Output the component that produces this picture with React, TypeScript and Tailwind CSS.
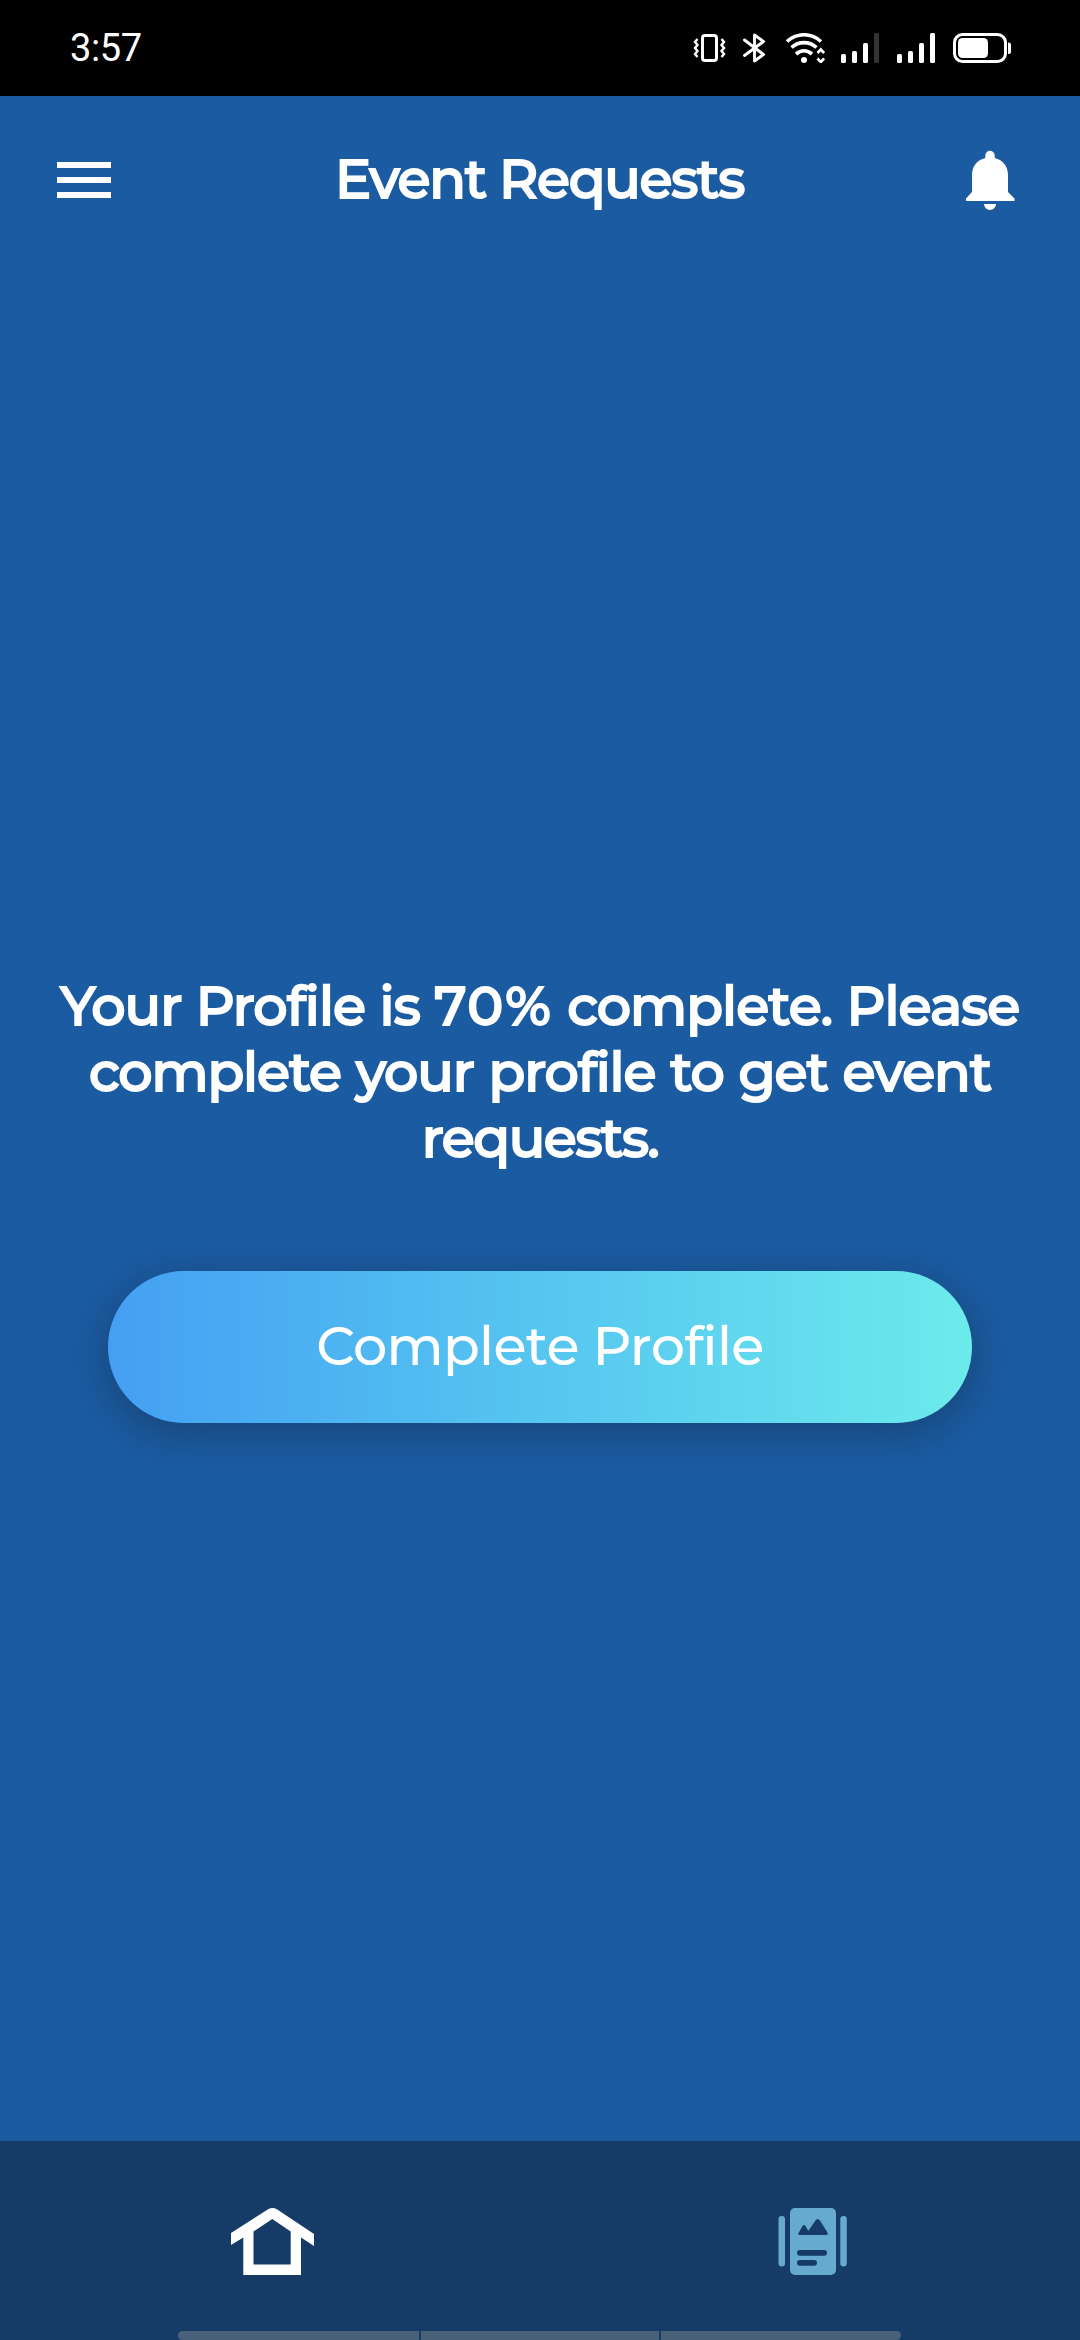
import type { ReactNode } from 'react';

type IconProps = { box: string; className: string; children: ReactNode };

const Icon = ({ box, className, children }: IconProps) => (
  <svg viewBox={box} className={`shrink-0 ${className}`} fill="none" aria-hidden="true">
    {children}
  </svg>
);

const SignalBars = ({ dimLast = false }: { dimLast?: boolean }) => (
  <Icon box="0 0 38 30" className="h-[30px] w-[38px]">
    <rect x="0" y="21" width="5" height="9" rx="1.5" fill="#fff" />
    <rect x="11" y="18" width="5" height="12" rx="1.5" fill="#fff" />
    <rect x="22" y="10" width="5" height="20" rx="1.5" fill="#fff" />
    <rect x="33" y="0" width="5" height="30" rx="1.5" fill={dimLast ? '#333' : '#fff'} />
  </Icon>
);

function StatusBar() {
  return (
    <div className="flex h-24 shrink-0 items-center justify-between bg-black pl-[70px] pr-[69px]">
      <span className="font-['Roboto',sans-serif] text-[38px] leading-none tracking-[-0.4px] text-white">3:57</span>
      <div className="flex items-center">
        <Icon box="693 33 33 30" className="mr-[17px] h-[30px] w-[33px]">
          <rect x="702.5" y="35.5" width="14" height="25" rx="2.5" stroke="#fff" strokeWidth="3" />
          <path d="M697.5 39l-2.5 3 2.5 3-2.5 3 2.5 3-2.5 3 2.5 3M721.5 39l2.5 3-2.5 3 2.5 3-2.5 3 2.5 3-2.5 3" stroke="#fff" strokeWidth="2.4" />
        </Icon>
        <Icon box="743 33 23 30" className="mr-[20px] h-[30px] w-[23px]">
          <path d="M744.5 40L763.5 54.5 754.5 61V35L763.5 41.5 744.5 55.5" stroke="#fff" strokeWidth="2.9" strokeLinejoin="round" strokeLinecap="round" />
        </Icon>
        <Icon box="786 33 39 30" className="mr-[16px] h-[30px] w-[39px]">
          <path d="M787 41.5C797 32.5 811 32.5 821 41.5M791.5 47.5C799 41 809 41 816.5 47.5M796 54C801 49.8 807 49.8 812 54" stroke="#fff" strokeWidth="3.6" />
          <circle cx="804" cy="60" r="3" fill="#fff" />
          <path d="M817.5 53l3.3-3.5 3.3 3.5M817.5 58.5l3.3 3.5 3.3-3.5" stroke="#fff" strokeWidth="2.6" />
        </Icon>
        <div className="mr-[18px] flex gap-[18px]">
          <SignalBars dimLast />
          <SignalBars />
        </div>
        <Icon box="953 33 58 30" className="h-[30px] w-[58px]">
          <rect x="954.5" y="34.5" width="51" height="27" rx="8" stroke="#fff" strokeWidth="3" />
          <rect x="958" y="38" width="30" height="20" rx="4.5" fill="#fff" />
          <path d="M1008 42.5q3 0 3 2v7.5q0 2-3 2z" fill="#fff" />
        </Icon>
      </div>
    </div>
  );
}

function Header() {
  return (
    <header className="flex h-[168px] shrink-0 items-center justify-between pl-[57px] pr-[65px]">
      <button className="flex w-[54px] flex-col gap-[9px]" aria-label="Menu">
        <span className="h-1.5 w-full bg-white" />
        <span className="h-1.5 w-full bg-white" />
        <span className="h-1.5 w-full bg-white" />
      </button>
      <h1 className="whitespace-nowrap pb-0.5 pl-[2px] text-[54px] font-medium leading-none tracking-[-1.3px] [-webkit-text-stroke:2px_#fff]">
        Event Requests
      </h1>
      <button aria-label="Notifications">
        <Icon box="966 150 49 60" className="h-[60px] w-[49px]">
          <path
            d="M985.3 158V155.5a4.7 4.7 0 0 1 9.4 0V158C1003 160 1008 166.5 1008 175V192l6.5 6.5V201H966v-2.5l6-6.5V175c0-8.5 5-15 13.3-17zM984 204h12a6 6 0 0 1-12 0z"
            fill="#fff"
          />
        </Icon>
      </button>
    </header>
  );
}

function ProfilePrompt() {
  return (
    <main className="flex grow flex-col items-center pt-[709px]">
      <p className="flex flex-col items-center whitespace-nowrap text-[54px] font-medium leading-[66px] [-webkit-text-stroke:2px_#fff]">
        <span className="tracking-[-0.95px] [word-spacing:0.8px]">
          Your Profile is <span className="tracking-[2px]">70%</span> complete. Please
        </span>
        <span className="tracking-[-1.15px] [word-spacing:1.5px]">complete your profile to get event</span>
        <span className="tracking-[-1.45px]">requests.</span>
      </p>
      <button className="mt-[100px] flex h-[152px] w-[864px] items-center justify-center rounded-full bg-linear-to-r from-[#459ff2] to-[#6cebeb] pb-0.5 text-[54px] font-medium tracking-[-0.7px] shadow-[0_9px_42px_rgba(16,16,16,0.3)]">
        Complete Profile
      </button>
    </main>
  );
}

function BottomNav() {
  return (
    <nav className="flex h-[199px] shrink-0 flex-col justify-between bg-[#153b66]">
      <div className="grid h-[190px] grid-cols-2 pt-[67px]">
        <button className="flex justify-center self-start" aria-label="Home">
          <Icon box="231 2208 83 67" className="mr-[-5px] h-[67px] w-[83px]">
            <path
              fillRule="evenodd"
              d="M231 2233L268.5 2209q4-2 8 0L314 2234v12l-13-8.5V2275H243.3V2237.5L231 2245zM272.3 2219L253.5 2231.5V2264.5H290.7V2231.5z"
              fill="#fff"
            />
          </Icon>
        </button>
        <button className="flex justify-center self-start" aria-label="Events">
          <Icon box="778 2208 69 67" className="ml-[5px] h-[67px] w-[69px]">
            <rect x="778.5" y="2216" width="6.5" height="50.5" rx="3.25" fill="#66aacf" />
            <rect x="840.3" y="2216" width="6.5" height="50.5" rx="3.25" fill="#66aacf" />
            <rect x="790" y="2208" width="46" height="67" rx="5" fill="#66aacf" />
            <path d="M800 2235q-2.5 0-1.3-2.3L802.5 2226q1.5-2 3 0L808.3 2231 815.5 2220.5q2.2-3 4.4 0L827.5 2232.5q.8 2.5-1.5 2.5z" fill="#153b66" />
            <rect x="797" y="2250" width="30" height="5.7" rx="2.85" fill="#153b66" />
            <rect x="797" y="2260" width="20" height="5.7" rx="2.85" fill="#153b66" />
          </Icon>
        </button>
      </div>
      <div className="ml-[178px] flex h-[9px] w-[723px] gap-0.5 overflow-hidden rounded-[5px]">
        <span className="w-[241px] bg-[#4a617a]" />
        <span className="w-[238px] bg-[#4a617a]" />
        <span className="grow bg-[#4a617a]" />
      </div>
    </nav>
  );
}

export default function App() {
  return (
    <div className="flex h-[2340px] w-[1080px] flex-col overflow-hidden bg-[#1b5ba1] font-['Montserrat','Inter',sans-serif] text-white">
      <StatusBar />
      <Header />
      <ProfilePrompt />
      <BottomNav />
    </div>
  );
}
